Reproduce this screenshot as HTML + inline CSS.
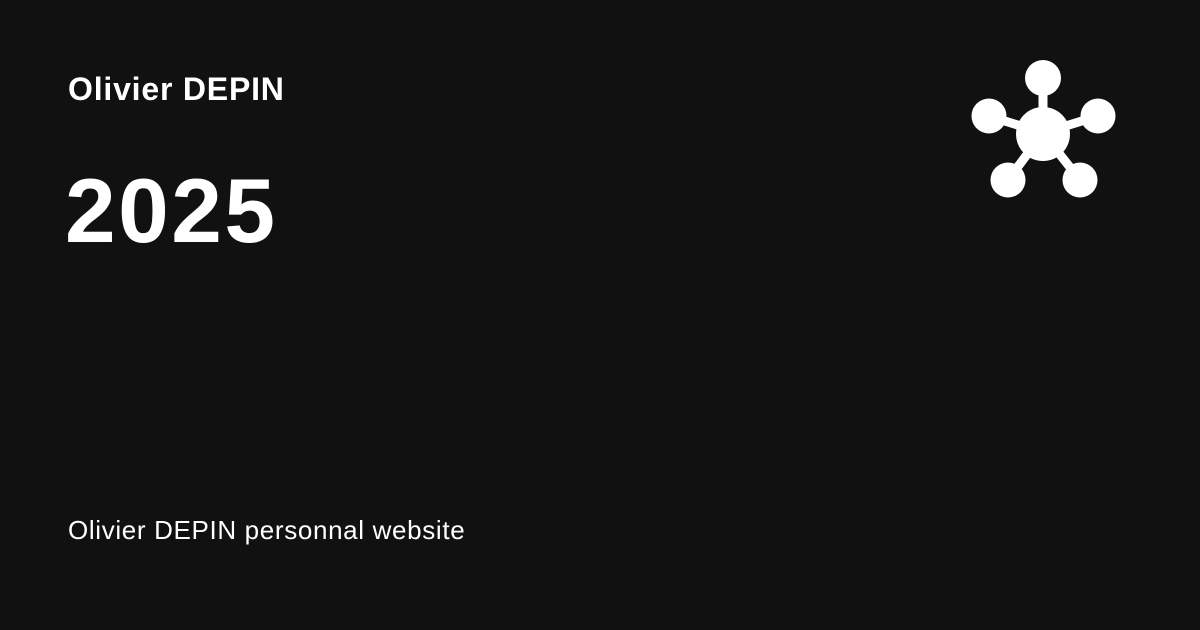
<!DOCTYPE html>
<html><head><style>
html,body{margin:0;padding:0;background:#111111;}
body{width:1200px;height:630px;position:relative;overflow:hidden;font-family:"Liberation Sans",sans-serif;color:#fff;}
.t1{position:absolute;left:68px;top:70px;font-size:32px;font-weight:bold;line-height:38px;letter-spacing:0.8px;}
.t2{position:absolute;left:65px;top:162px;font-size:91px;font-weight:bold;line-height:100px;letter-spacing:2.5px;}
.t3{position:absolute;left:68px;top:514px;font-size:26px;line-height:32px;letter-spacing:0.65px;}
svg{position:absolute;left:0;top:0;}
</style></head><body>
<div class="t1">Olivier DEPIN</div>
<div class="t2">2025</div>
<div class="t3">Olivier DEPIN personnal website</div>
<svg width="1200" height="630">
<g stroke="#fff" stroke-width="9">
<line x1="1043" y1="133" x2="1043" y2="78"/>
<line x1="1043" y1="133" x2="989" y2="116"/>
<line x1="1043" y1="133" x2="1098" y2="116"/>
<line x1="1043" y1="133" x2="1008" y2="180"/>
<line x1="1043" y1="133" x2="1080" y2="180"/>
</g>
<g fill="#fff">
<circle cx="1043" cy="134" r="27"/>
<circle cx="1043" cy="78" r="18"/>
<circle cx="989" cy="116" r="17.5"/>
<circle cx="1098" cy="116" r="17.5"/>
<circle cx="1008" cy="180" r="17.5"/>
<circle cx="1080" cy="180" r="17.5"/>
</g>
</svg>
</body></html>
